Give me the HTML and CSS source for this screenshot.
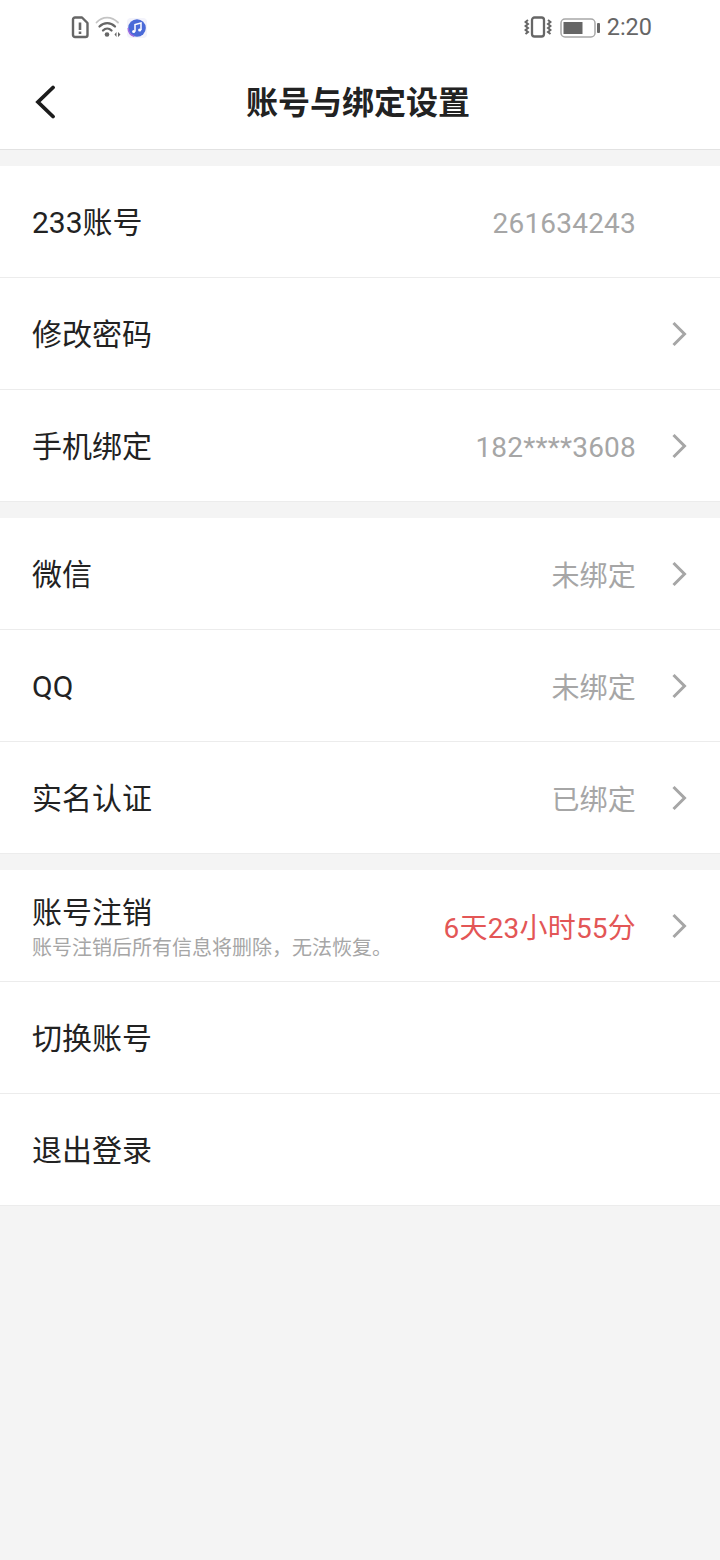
FILE: index.html
```html
<!DOCTYPE html>
<html lang="zh-CN">
<head>
    <meta charset="UTF-8">
    <meta name="viewport" content="width=device-width, initial-scale=1.0">
    <title>账号与绑定设置</title>
    <link rel="stylesheet" href="styles.css">
</head>
<body>
    <div class="status-bar">
        <div class="status-left">
            <svg width="18" height="24" viewBox="0 0 18 24"><path d="M4 2.500h7l5.500 5.500v12a2 2 0 0 1-2 2h-10.500a2 2 0 0 1-2-2v-15.500a2 2 0 0 1 2-2z" fill="none" stroke="#666" stroke-width="2.400" stroke-linejoin="round"/><path d="M9 7.500v7.500M9 16.500v2.500" stroke="#666" stroke-width="2.600"/></svg>
            <svg width="26" height="24" viewBox="0 0 26 24"><g fill="none" stroke-linecap="round"><path d="M1.500 7.500c6-6.500 15-6.500 21.500 0" stroke="#c4c4c4" stroke-width="1.800"/><path d="M4.500 11.500c4.500-4.500 11-4.500 15.500 0" stroke="#666" stroke-width="2.300"/><path d="M8 15.500c2.500-2.500 6-2.500 8.500 0" stroke="#666" stroke-width="2.300"/></g><circle cx="12" cy="19.500" r="2.300" fill="#666"/><path d="M19.500 19.500l2-2.500v5zM25.500 19.500l-2.500-2.500v5z" fill="#666"/></svg>
            <svg class="music-icon" width="20" height="20" viewBox="0 0 20 20"><rect width="20" height="20" rx="4" fill="#f3f3fb"/><circle cx="10" cy="10" r="8.800" fill="#4a6ad8"/><path d="M1.200 10a8.800 8.800 0 0 0 6 8.300" fill="none" stroke="#a06be0" stroke-width="1.500"/><path d="M8 13.500v-7l6-1.500v7" fill="none" stroke="#fff" stroke-width="1.500"/><circle cx="6.700" cy="13.500" r="1.600" fill="#fff"/><circle cx="12.700" cy="12" r="1.600" fill="#fff"/></svg>
        </div>
        <div class="status-right">
            <svg width="28" height="24" viewBox="0 0 28 24"><rect x="8" y="2.500" width="12" height="19" rx="2.500" fill="none" stroke="#666" stroke-width="2.300"/><path d="M4 5L1.500 7 4 9l-2.500 2L4 13l-2.500 2L4 17l-2.500 2M24 5l2.500 2L24 9l2.500 2L24 13l2.500 2L24 17l2.500 2" fill="none" stroke="#666" stroke-width="2"/></svg>
            <svg class="battery" width="40" height="20" viewBox="0 0 40 20"><rect x="1" y="1" width="34" height="18" rx="4" fill="#fff" stroke="#a8a8a8" stroke-width="1.500"/><rect x="3.500" y="4" width="19" height="12" fill="#666"/><rect x="37" y="5" width="3" height="10" rx="1" fill="#666"/></svg>
            <span class="clock">2:20</span>
        </div>
    </div>

    <div class="title-bar">
        <svg class="back" width="24" height="36" viewBox="0 0 24 36"><path d="M20 4.500L5 19l15 14.500" fill="none" stroke="#1c1c1c" stroke-width="3.800" stroke-linecap="round"/></svg>
        <h1>账号与绑定设置</h1>
    </div>

    <div class="group">
        <div class="row">
            <span class="label">233账号</span>
            <span class="value no-arrow">261634243</span>
        </div>
        <div class="row">
            <span class="label">修改密码</span>
            <svg class="arrow" viewBox="0 0 16 26"><path d="M1.500 2l11 11-11 11" /></svg>
        </div>
        <div class="row">
            <span class="label">手机绑定</span>
            <span class="value phone">182****3608</span>
            <svg class="arrow" viewBox="0 0 16 26"><path d="M1.500 2l11 11-11 11" /></svg>
        </div>
    </div>

    <div class="group">
        <div class="row">
            <span class="label">微信</span>
            <span class="value">未绑定</span>
            <svg class="arrow" viewBox="0 0 16 26"><path d="M1.500 2l11 11-11 11" /></svg>
        </div>
        <div class="row">
            <span class="label">QQ</span>
            <span class="value">未绑定</span>
            <svg class="arrow" viewBox="0 0 16 26"><path d="M1.500 2l11 11-11 11" /></svg>
        </div>
        <div class="row">
            <span class="label">实名认证</span>
            <span class="value">已绑定</span>
            <svg class="arrow" viewBox="0 0 16 26"><path d="M1.500 2l11 11-11 11" /></svg>
        </div>
    </div>

    <div class="group">
        <div class="row">
            <div class="label-stack">
                <span class="label">账号注销</span>
                <span class="hint">账号注销后所有信息将删除，无法恢复。</span>
            </div>
            <span class="value countdown">6天23小时55分</span>
            <svg class="arrow" viewBox="0 0 16 26"><path d="M1.500 2l11 11-11 11" /></svg>
        </div>
        <div class="row">
            <span class="label">切换账号</span>
        </div>
        <div class="row">
            <span class="label">退出登录</span>
        </div>
    </div>
</body>
</html>
```

FILE: styles.css
```css
* {
    box-sizing: border-box;
}

body {
    margin: 0;
    min-height: 1560px;
    background: #f4f4f4;
    font-family: Roboto, "Noto Sans CJK SC", sans-serif;
    color: #222;
}

.status-bar {
    height: 54px;
    background: #fff;
    display: flex;
    justify-content: space-between;
    align-items: center;
    padding: 0 68px 0 71px;
}

.status-left, .status-right {
    display: flex;
    align-items: center;
}

.status-left {
    gap: 6px;
}

.status-right {
    gap: 8px;
}

.music-icon {
    margin-top: 2px;
}

.battery {
    margin-top: 1px;
}

.clock {
    margin-left: -1px;
    font-size: 23.500px;
    color: #666;
}

.title-bar {
    height: 96px;
    background: #fff;
    border-bottom: 1px solid #e2e2e2;
    display: flex;
    align-items: center;
    justify-content: center;
    position: relative;
}

.title-bar h1 {
    margin: 0 4px 4px 0;
    font-size: 32px;
    font-weight: 700;
    color: #222;
}

.back {
    position: absolute;
    left: 33px;
    top: 29px;
}

.group {
    margin-top: 16px;
    background: #fff;
    border-bottom: 1px solid #ececec;
}

.row {
    height: 112px;
    padding: 0 32px;
    display: flex;
    align-items: center;
    border-bottom: 1px solid #ececec;
}

.row:last-child {
    border-bottom: none;
    height: 111px;
}

.label {
    font-size: 30px;
    line-height: 40px;
    padding-top: 2px;
    color: #222;
}

.label-stack {
    display: flex;
    flex-direction: column;
    padding-top: 5px;
}

.label-stack .label {
    line-height: 36px;
    padding-top: 0;
}

.hint {
    font-size: 20px;
    line-height: 26px;
    margin-top: 4px;
    color: #a6a6a6;
}

.value {
    margin-left: auto;
    font-size: 28px;
    letter-spacing: 0.200px;
    color: #a6a6a6;
}

.value.no-arrow, .value.phone {
    padding-top: 3px;
}

.value.no-arrow {
    margin-right: 52px;
}

.countdown {
    color: #e35656;
}

.arrow {
    width: 16px;
    height: 26px;
    margin-left: auto;
    fill: none;
    stroke: #a6a6a6;
    stroke-width: 3;
}

.value + .arrow {
    margin-left: 36px;
}
```
